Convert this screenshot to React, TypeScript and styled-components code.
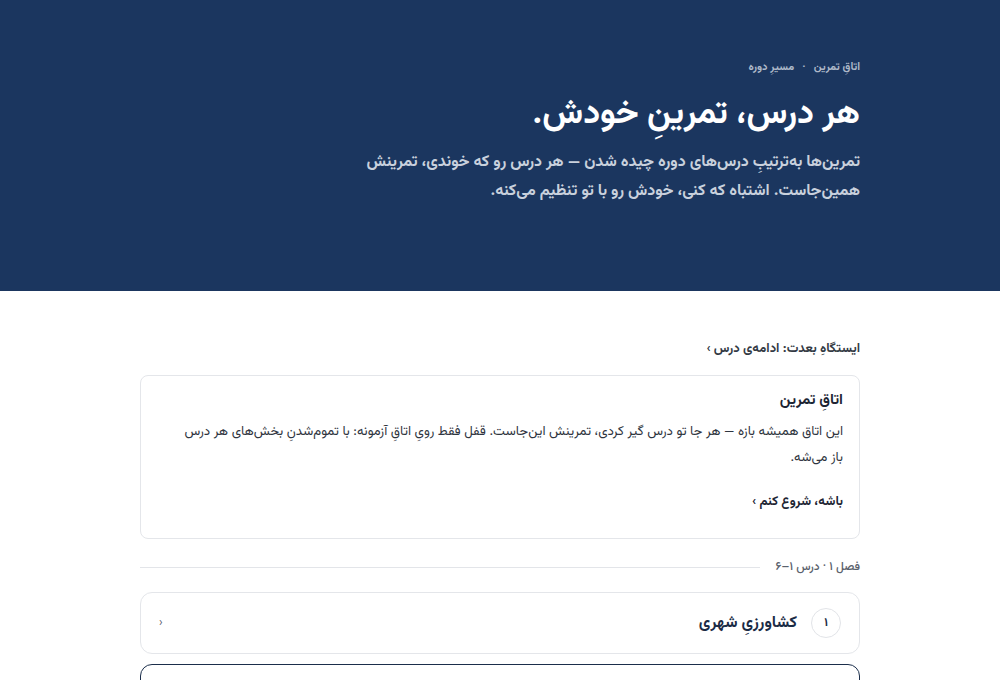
import React from 'react';
import styled, { createGlobalStyle } from 'styled-components';

const GlobalStyle = createGlobalStyle`
  * { box-sizing: border-box; }
  body {
    margin: 0;
    background: #ffffff;
    font-family: "Vazirmatn", "Noto Sans Arabic", "DejaVu Sans", sans-serif;
  }
`;

const Page = styled.div`
  direction: rtl;
  min-height: 680px;
`;

const Hero = styled.header`
  background: #1b365f;
  height: 291px;
  padding-top: 58px;
`;

const Inner = styled.div`
  width: 720px;
  margin: 0 auto;
`;

const Crumbs = styled.div`
  display: flex;
  gap: 8px;
  font-size: 11px;
  font-weight: 700;
  color: #aeb9c9;
  line-height: 20px;
`;

const Title = styled.h1`
  margin: 13px 0 0;
  font-size: 34px;
  font-weight: 700;
  color: #ffffff;
  line-height: 48px;
`;

const Lead = styled.p`
  margin: 9px 0 0;
  max-width: 500px;
  font-size: 16px;
  font-weight: 700;
  line-height: 29px;
  color: #c9d1dd;
`;

const Main = styled(Inner)`
  padding-top: 48px;
`;

const NextLink = styled.div`
  font-size: 13px;
  font-weight: 700;
  color: #333a44;
  line-height: 20px;
`;

const Card = styled.section`
  margin-top: 16px;
  border: 1px solid #e4e6ea;
  border-radius: 8px;
  padding: 13px 16px 26px 40px;
`;

const CardTitle = styled.h2`
  margin: 0;
  font-size: 15px;
  font-weight: 700;
  color: #1d2533;
  line-height: 24px;
`;

const CardText = styled.p`
  margin: 6px 0 0;
  font-size: 13.3px;
  line-height: 26px;
  color: #2f3540;
`;

const CardAction = styled.div`
  margin-top: 21px;
  font-size: 13px;
  font-weight: 700;
  color: #1d2533;
  line-height: 20px;
`;

const Section = styled.div`
  display: flex;
  align-items: center;
  gap: 16px;
  margin-top: 20px;
  font-size: 12px;
  font-weight: 500;
  color: #5b626d;
  line-height: 16px;
  &::after {
    content: "";
    flex: 1;
    height: 1px;
    background: #e3e5e9;
  }
`;

const Lesson = styled.div<{ $active?: boolean }>`
  display: flex;
  align-items: center;
  gap: 14px;
  margin-top: ${p => (p.$active ? '10px' : '17px')};
  height: 62px;
  padding: 0 18px;
  border: ${p => (p.$active ? '1.5px solid #1b2e4b' : '1px solid #e4e6ea')};
  border-radius: 12px;
`;

const Num = styled.span`
  width: 30px;
  height: 30px;
  border: 1px solid #e2e4e8;
  border-radius: 50%;
  display: flex;
  align-items: center;
  justify-content: center;
  font-size: 12px;
  font-weight: 700;
  color: #1b2b45;
`;

const LessonName = styled.span`
  flex: 1;
  font-size: 16px;
  font-weight: 700;
  color: #1b2b45;
`;

const Chevron = styled.span`
  font-size: 12px;
  color: #5b626d;
`;

export default function App() {
  return (
    <Page>
      <GlobalStyle />
      <Hero>
        <Inner>
          <Crumbs>
            <span>اتاقِ تمرین</span>
            <span>·</span>
            <span>مسیرِ دوره</span>
          </Crumbs>
          <Title>هر درس، تمرینِ خودش.</Title>
          <Lead>
            تمرین‌ها به‌ترتیبِ درس‌های دوره چیده شدن — هر درس رو که خوندی، تمرینش همین‌جاست. اشتباه که کنی، خودش رو با تو تنظیم می‌کنه.
          </Lead>
        </Inner>
      </Hero>
      <Main>
        <NextLink>ایستگاهِ بعدت: ادامه‌ی درس ›</NextLink>
        <Card>
          <CardTitle>اتاقِ تمرین</CardTitle>
          <CardText>
            این اتاق همیشه بازه — هر جا تو درس گیر کردی، تمرینش این‌جاست. قفل فقط رویِ اتاقِ آزمونه: با تموم‌شدنِ بخش‌های هر درس باز می‌شه.
          </CardText>
          <CardAction>باشه، شروع کنم ›</CardAction>
        </Card>
        <Section>فصل ۱ · درس ۱–۶</Section>
        <Lesson>
          <Num>۱</Num>
          <LessonName>کشاورزیِ شهری</LessonName>
          <Chevron>‹</Chevron>
        </Lesson>
        <Lesson $active />
      </Main>
    </Page>
  );
}
